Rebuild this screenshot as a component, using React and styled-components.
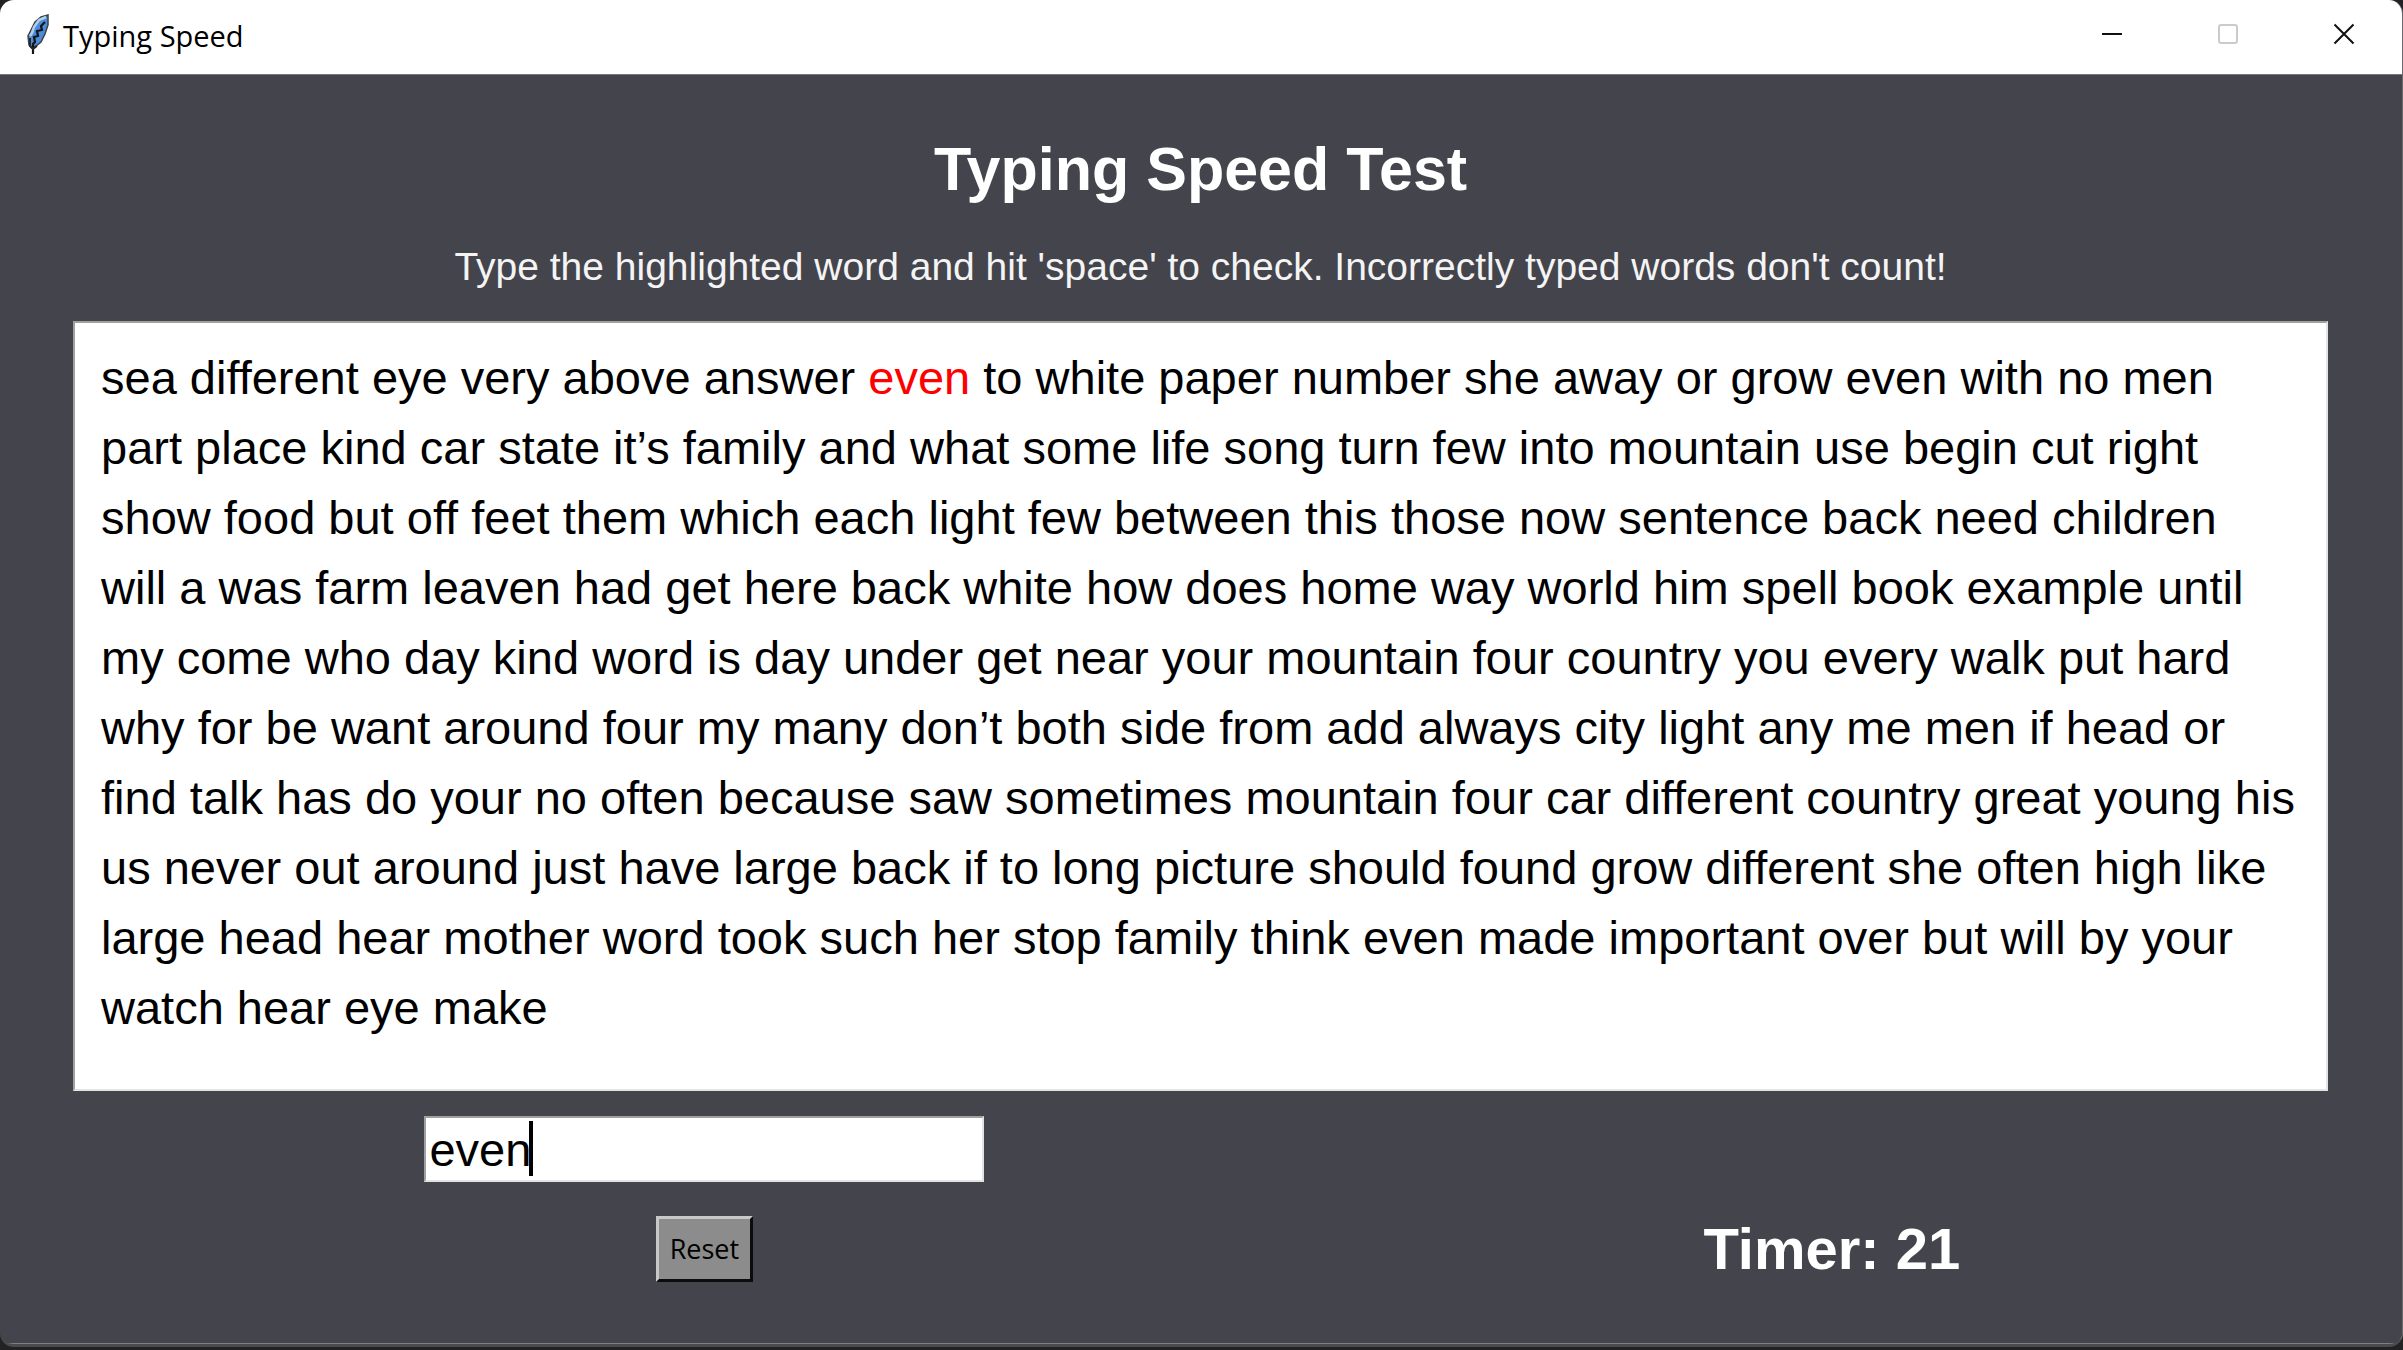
import React, { useState } from "react";
import styled, { createGlobalStyle } from "styled-components";

const GlobalStyle = createGlobalStyle`
  * { box-sizing: border-box; }
  body { margin: 0; background: #222224; }
`;

const sans = `"Liberation Sans", Arial, sans-serif`;
const system = `"Open Sans", "Segoe UI", sans-serif`;

const Window = styled.div`
  min-height: calc(100vh - 3px);
  margin-bottom: 3px;
  display: flex;
  flex-direction: column;
  background: #44444c;
  border-right: 1px solid #6a6a6e;
  border-bottom: 3px solid #4b4b4d;
  border-radius: 14px;
  overflow: hidden;
`;

const TitleBar = styled.header`
  height: 75px;
  display: flex;
  align-items: flex-start;
  padding-left: 26px;
  background: #ffffff;
  border-bottom: 1px solid #77777c;
`;

const Feather = styled.svg`
  width: 24px;
  height: 42px;
  margin: 14px 13px 0 0;
`;

const WindowTitle = styled.span`
  flex: 1;
  font: 29px/72px ${system};
  color: #000000;
`;

const CaptionButton = styled.button`
  width: 116px;
  height: 68px;
  padding: 0;
  border: 0;
  display: grid;
  place-items: center;
  background: transparent;
  color: ${(p) => (p.disabled ? "#cbcbcb" : "#101010")};

  svg { width: 22px; height: 22px; fill: none; stroke: currentColor; stroke-width: 2; }
`;

const Content = styled.main`
  flex: 1;
  display: flex;
  flex-direction: column;
  padding: 60px 74px 0 73px;
  border-bottom: 1px solid #7f7d86;
`;

const Heading = styled.h1`
  margin: 0;
  text-align: center;
  font: bold 61px/68px ${sans};
  color: #ffffff;
`;

const Hint = styled.p`
  margin: 40px 0 30px;
  text-align: center;
  white-space: nowrap;
  font: 39px/48px ${sans};
  color: #f4f4f4;
`;

const WordBox = styled.div`
  padding: 20px 0 46px 26px;
  background: #ffffff;
  border: 2px solid;
  border-color: #a0a0a0 #e3e3e3 #e3e3e3 #a0a0a0;
  font: 47px/70px ${sans};
  color: #000000;
`;

const Line = styled.div`
  white-space: nowrap;
`;

const Word = styled.span`
  color: ${(p) => (p.$current ? "#ff0000" : "inherit")};
`;

const Controls = styled.div`
  display: grid;
  grid-template-columns: 56fr 44fr;
  row-gap: 34px;
  padding-top: 25px;
  justify-items: center;
  align-items: center;
`;

const Field = styled.div`
  position: relative;
  grid-column: 1;
`;

const Entry = styled.input`
  display: block;
  width: 560px;
  height: 66px;
  padding: 0 3px;
  border: 2px solid;
  border-color: #a0a0a0 #e3e3e3 #e3e3e3 #a0a0a0;
  border-radius: 0;
  outline: 0;
  background: #ffffff;
  caret-color: transparent;
  font: 47px/60px ${sans};
  color: #000000;
`;

const Caret = styled.span`
  position: absolute;
  top: 5px;
  left: 105px;
  width: 4px;
  height: 55px;
  background: #000000;
`;

const ResetButton = styled.button`
  grid-column: 1;
  height: 66px;
  padding: 0 11px;
  border: 3px solid;
  border-color: #c8c8c8 #0c0c0e #0c0c0e #c8c8c8;
  background: #8c8c8c;
  font: 27px/40px ${system};
  color: #000000;
`;

const Timer = styled.output`
  grid-column: 2;
  font: bold 58px/66px ${sans};
  color: #ffffff;
`;

const lines = [
  "sea different eye very above answer even to white paper number she away or grow even with no men",
  "part place kind car state it’s family and what some life song turn few into mountain use begin cut right",
  "show food but off feet them which each light few between this those now sentence back need children",
  "will a was farm leaven had get here back white how does home way world him spell book example until",
  "my come who day kind word is day under get near your mountain four country you every walk put hard",
  "why for be want around four my many don’t both side from add always city light any me men if head or",
  "find talk has do your no often because saw sometimes mountain four car different country great young his",
  "us never out around just have large back if to long picture should found grow different she often high like",
  "large head hear mother word took such her stop family think even made important over but will by your",
  "watch hear eye make",
];

const currentWord = { line: 0, index: 6 };

function FeatherIcon() {
  return (
    <Feather viewBox="0 0 24 42" aria-hidden="true">
      <path d="M22 1 L15 3 L9 8 L5 16 L2 22 L3 31 L6 34 L10 32 L15 28 L19 20 L22 11 Z" fill="#4b8bd8" stroke="#3c4248" strokeWidth="1.5" />
      <path d="M20 3 L13 6 L8 13 L6 19 L4 22" fill="none" stroke="#b3cfe8" strokeWidth="2.5" />
      <path d="M19 8 L15 12 L16 16 L11 17 L12 22 L8 23 L9 28 L7 30 V40" fill="none" stroke="#111418" strokeWidth="2.2" />
      <path d="M4 24 V32 L7 35 L11 32" fill="none" stroke="#24282c" strokeWidth="2" />
    </Feather>
  );
}

export default function App() {
  const [typed, setTyped] = useState("even");

  return (
    <>
      <GlobalStyle />
      <Window>
        <TitleBar>
          <FeatherIcon />
          <WindowTitle>Typing Speed</WindowTitle>
          <CaptionButton type="button" aria-label="Minimize">
            <svg viewBox="0 0 22 22"><path d="M1 11H21" /></svg>
          </CaptionButton>
          <CaptionButton type="button" aria-label="Maximize" disabled>
            <svg viewBox="0 0 22 22"><rect x="2" y="2" width="18" height="18" rx="2" /></svg>
          </CaptionButton>
          <CaptionButton type="button" aria-label="Close">
            <svg viewBox="0 0 22 22"><path d="M1.5 1.5L20.5 20.5M20.5 1.5L1.5 20.5" /></svg>
          </CaptionButton>
        </TitleBar>
        <Content>
          <Heading>Typing Speed Test</Heading>
          <Hint>Type the highlighted word and hit 'space' to check. Incorrectly typed words don't count!</Hint>
          <WordBox>
            {lines.map((line, row) => (
              <Line key={row}>
                {line.split(" ").map((word, i) => (
                  <React.Fragment key={i}>
                    {i > 0 && " "}
                    <Word $current={row === currentWord.line && i === currentWord.index}>{word}</Word>
                  </React.Fragment>
                ))}
              </Line>
            ))}
          </WordBox>
          <Controls>
            <Field>
              <Entry aria-label="Typed word" value={typed} onChange={(e) => setTyped(e.target.value)} />
              <Caret />
            </Field>
            <ResetButton type="button" onClick={() => setTyped("")}>Reset</ResetButton>
            <Timer>Timer: 21</Timer>
          </Controls>
        </Content>
      </Window>
    </>
  );
}
